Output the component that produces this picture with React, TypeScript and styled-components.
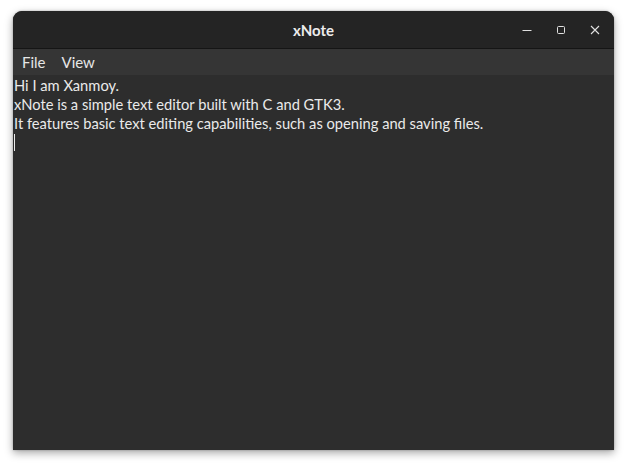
import React from "react";
import styled, { createGlobalStyle } from "styled-components";

const Global = createGlobalStyle`
  html, body { margin: 0; padding: 0; background: #ffffff; }
  body { width: 628px; height: 466px; overflow: hidden; }
`;

const Page = styled.div`
  width: 628px;
  height: 466px;
  box-sizing: border-box;
  padding: 11px 14px 16px 13px;
  display: flex;
`;

const Window = styled.div`
  flex: 1;
  display: flex;
  flex-direction: column;
  border-radius: 9px 9px 0 0;
  overflow: hidden;
  background: #2d2d2d;
  box-shadow: 0 3px 9px rgba(0, 0, 0, 0.35), 0 0 2px rgba(0, 0, 0, 0.3);
  font-family: Lato, "Noto Sans", sans-serif;
  color: #e6e6e6;
`;

const TitleBar = styled.div`
  height: 37px;
  flex: none;
  background: #242424;
  border-bottom: 1px solid #151515;
  display: grid;
  grid-template-columns: 1fr auto 1fr;
  align-items: center;
`;

const Title = styled.div`
  grid-column: 2;
  font-weight: 700;
  font-size: 15px;
  color: #ececec;
`;

const Controls = styled.div`
  grid-column: 3;
  justify-self: end;
  display: flex;
  gap: 10px;
  padding-right: 7px;
`;

const CtrlButton = styled.div`
  width: 24px;
  height: 24px;
  display: flex;
  align-items: center;
  justify-content: center;
  color: #e0e0e0;
`;

const MenuBar = styled.div`
  height: 26px;
  flex: none;
  background: #353535;
  display: flex;
  align-items: center;
  padding-left: 9px;
`;

const MenuItem = styled.div`
  font-size: 15px;
  margin-right: 16px;
  color: #e6e6e6;
`;

const Editor = styled.div`
  flex: 1;
  padding: 1px 1px;
  font-size: 14.7px;
  line-height: 19px;
  color: #eaeaea;
`;

const Line = styled.div`
  white-space: pre;
  height: 19px;
`;

const Caret = styled.div`
  width: 1px;
  height: 17px;
  margin-top: 1px;
  background: #eaeaea;
`;

export default function App() {
  return (
    <>
      <Global />
      <Page>
        <Window>
          <TitleBar>
            <Title>xNote</Title>
            <Controls>
              <CtrlButton>
                <svg width="10" height="10" viewBox="0 0 10 10">
                  <line x1="0.5" y1="5.5" x2="9.5" y2="5.5" stroke="currentColor" strokeWidth="1" />
                </svg>
              </CtrlButton>
              <CtrlButton>
                <svg width="10" height="10" viewBox="0 0 10 10">
                  <rect x="1.5" y="1.5" width="7" height="7" rx="1" fill="none" stroke="currentColor" strokeWidth="1" />
                </svg>
              </CtrlButton>
              <CtrlButton>
                <svg width="10" height="10" viewBox="0 0 10 10">
                  <path d="M1 1 L9 9 M9 1 L1 9" stroke="currentColor" strokeWidth="1.1" />
                </svg>
              </CtrlButton>
            </Controls>
          </TitleBar>
          <MenuBar>
            <MenuItem>File</MenuItem>
            <MenuItem>View</MenuItem>
          </MenuBar>
          <Editor>
            <Line>Hi I am Xanmoy.</Line>
            <Line>xNote is a simple text editor built with C and GTK3.</Line>
            <Line>It features basic text editing capabilities, such as opening and saving files.</Line>
            <Caret />
          </Editor>
        </Window>
      </Page>
    </>
  );
}
